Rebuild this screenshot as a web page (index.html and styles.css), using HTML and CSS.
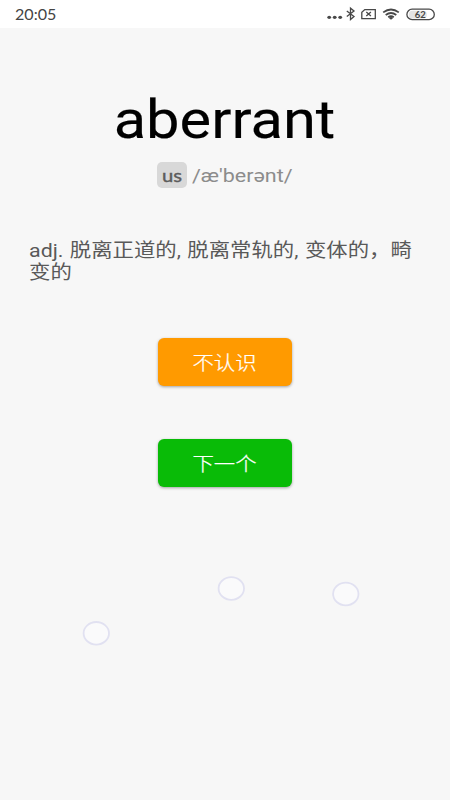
FILE: index.html
```html
<!DOCTYPE html>
<html lang="zh-CN">
<head>
<meta charset="utf-8">
<title>aberrant</title>
<link rel="stylesheet" href="styles.css">
</head>
<body>
<header class="status">
  <span class="time">20:05</span>
  <svg class="indicators" width="112" height="16" viewBox="0 0 112 16" fill="none" stroke="#484848" stroke-width="1.3">
    <g fill="#484848" stroke="none"><ellipse cx="3.2" cy="11.3" rx="1.9" ry="1.6"/><ellipse cx="8.7" cy="11.3" rx="1.9" ry="1.6"/><ellipse cx="14.2" cy="11.3" rx="1.9" ry="1.6"/></g>
    <path d="M20.8 5l7.2 5.5-3.5 3V2.2l3.5 2.8-7.2 5.5"/>
    <path d="M38.8 3.6H49.3V12.6H35.8V6.3z"/>
    <path d="M40.3 6l4.6 4M44.9 6l-4.6 4"/>
    <path stroke-width="1.8" d="M57.2 6.4Q65 .6 72.8 6.4M59.7 9Q65 5 70.3 9M62.2 11.3Q65 9.2 67.8 11.3"/>
    <path fill="#484848" stroke="none" d="M62.8 11.9Q65 10.3 67.2 11.9L65 13.7z"/>
    <rect x="82.8" y="4.7" width="18" height="7.8" rx="3.5" fill="#e4e4e4" stroke="none"/>
    <rect x="80.9" y="3.2" width="27.4" height="10.4" rx="5.2"/>
    <text class="charge" x="88.8" y="11.6" textLength="11" lengthAdjust="spacingAndGlyphs">62</text>
  </svg>
</header>
<main class="card">
  <h1 class="word"><span class="wide">aberrant</span></h1>
  <div class="phonetic">
    <span class="accent"><span class="wide">us</span></span>
    <span class="ipa">/æ'berənt/</span>
  </div>
  <p class="meaning">adj. 脱离正道的, 脱离常轨的, 变体的，畸变的</p>
  <button class="btn unknown"><span class="wide">不认识</span></button>
  <button class="btn next"><span class="wide">下一个</span></button>
</main>
<svg class="bubbles" width="450" height="100" viewBox="0 0 450 100" fill="#fafafb" stroke="#e1e1f1" stroke-width="1.8">
  <ellipse cx="231.3" cy="28.5" rx="12.7" ry="11.3"/>
  <ellipse cx="345.8" cy="34" rx="12.7" ry="11.3"/>
  <ellipse cx="96.3" cy="73.3" rx="12.7" ry="11.3"/>
</svg>
</body>
</html>
```
FILE: styles.css
```css
* { box-sizing: border-box; }
body {
  margin: 0;
  width: 450px;
  height: 800px;
  overflow: hidden;
  background: #f7f7f7;
  font-family: Roboto, "Noto Sans CJK SC", sans-serif;
}
.status {
  display: flex;
  justify-content: space-between;
  height: 28px;
  padding: 6px 12.3px 0 15px;
  background: #fff;
}
.time {
  font: 14.5px/18px Lato, sans-serif;
  color: #444;
  transform: scaleX(1.11);
  transform-origin: left;
}
.charge {
  font: bold 8.5px Lato, sans-serif;
  fill: #484848;
  stroke: none;
}
.card {
  display: flex;
  flex-direction: column;
  align-items: center;
}
.wide {
  display: inline-block;
  transform: scaleX(1.125);
}
.word {
  margin: 61px 0 0;
  font-size: 53px;
  font-weight: 400;
  line-height: 62px;
  color: #000;
  -webkit-text-stroke: .15px #000;
}
.phonetic {
  display: flex;
  width: 136px;
  margin-top: 11px;
  line-height: 26px;
}
.accent {
  width: 30px;
  height: 26px;
  border-radius: 5px;
  background: #d8d8d8;
  color: #5c5c5c;
  font: 18px/26px Lato, sans-serif;
  -webkit-text-stroke: .4px #5c5c5c;
  text-align: center;
}
.ipa {
  height: 26px;
  margin-left: 5px;
  font-size: 19px;
  line-height: 28px;
  white-space: nowrap;
  color: #8c8c8c;
  transform: scaleX(1.13);
  transform-origin: left;
}
.meaning {
  align-self: flex-start;
  width: 345px;
  height: 44px;
  margin: 52px 0 0 29px;
  font-size: 19px;
  line-height: 22px;
  word-spacing: 1px;
  color: #595959;
  transform: scaleX(1.125);
  transform-origin: left;
}
.btn {
  width: 134px;
  height: 48px;
  padding: 0;
  border: 0;
  border-radius: 6px;
  box-shadow: 0 1px 3px rgba(0, 0, 0, .35);
  color: #fff;
  font: 300 19px/48px "Noto Sans CJK SC", sans-serif;
  -webkit-text-stroke: .25px #fff;
}
.unknown {
  margin-top: 54px;
  background: #ff9a00;
}
.next {
  margin-top: 53px;
  background: #09bb07;
}
.bubbles {
  display: block;
  margin-top: 73px;
}
```
